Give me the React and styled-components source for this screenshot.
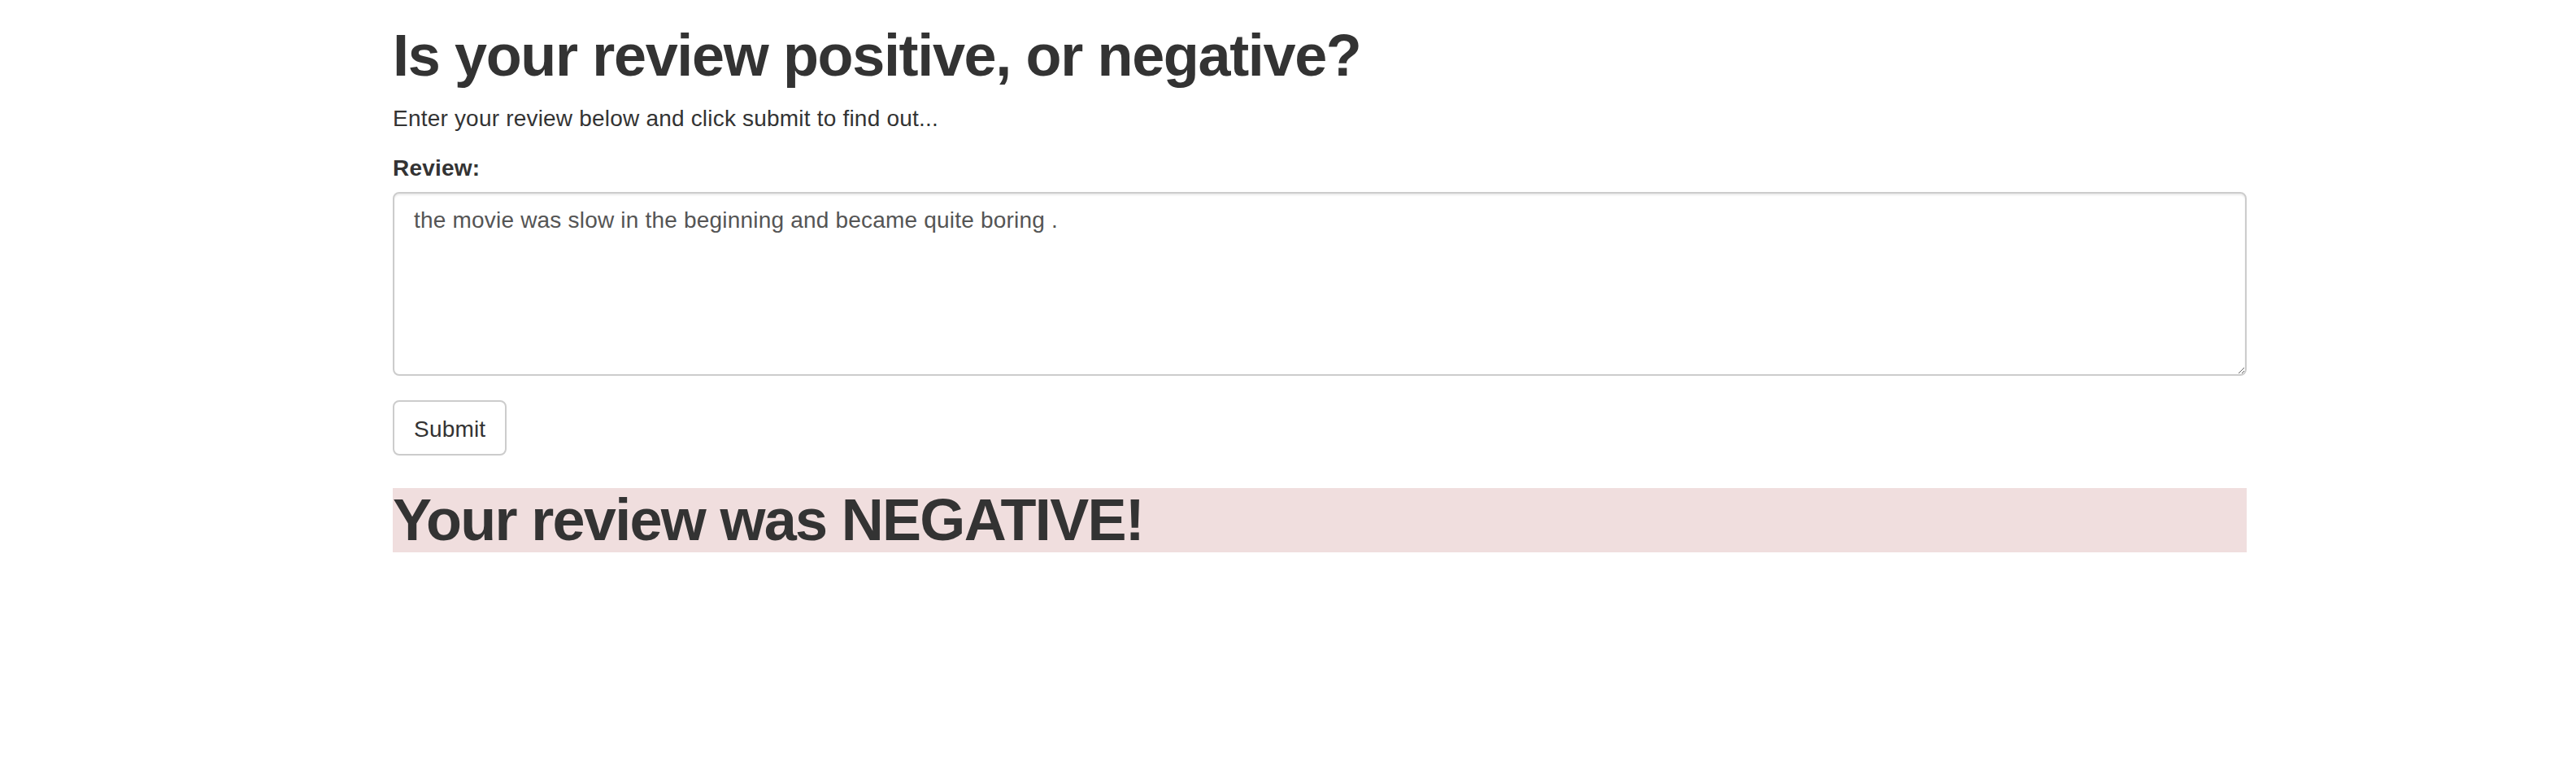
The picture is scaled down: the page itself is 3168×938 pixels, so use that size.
import React from 'react';
import styled, { createGlobalStyle } from 'styled-components';

const GlobalStyle = createGlobalStyle`
    body {
        margin: 0;
        background: #fff;
        color: #333;
        font-family: "Liberation Sans", Arial, sans-serif;
        font-size: 28px;
        line-height: 40px;
        letter-spacing: 0.2px;
    }
`;

const Container = styled.div`
    width: 2280px;
    margin-left: 483px;
    padding-top: 29px;
`;

const Heading = styled.h1`
    margin: ${props => props.top || 0}px 0 18px 0;
    font-size: 72px;
    line-height: 79px;
    font-weight: 700;
    letter-spacing: ${props => props.tight}px;
    color: #333;
    background: ${props => props.bg || 'transparent'};
`;

const Lead = styled.p`
    margin: 0 0 21px 0;
`;

const FormGroup = styled.div`
    display: flex;
    flex-direction: column;
    align-items: flex-start;
    margin-bottom: 30px;
`;

const Label = styled.label`
    font-weight: 700;
    margin-bottom: 9px;
`;

const TextArea = styled.textarea`
    box-sizing: border-box;
    width: 100%;
    height: 226px;
    padding: 13px 24px 12px 24px;
    border: 2px solid #ccc;
    border-radius: 8px;
    box-shadow: inset 0 2px 2px rgba(0, 0, 0, 0.075);
    font-family: "Liberation Sans", Arial, sans-serif;
    font-size: 28px;
    line-height: 40px;
    letter-spacing: 0.2px;
    color: #555;
    background: #fff;
    outline: none;
`;

const Button = styled.button`
    box-sizing: border-box;
    height: 68px;
    padding: 14px 24px 10px 24px;
    border: 2px solid #ccc;
    border-radius: 8px;
    background: #fff;
    color: #333;
    font-family: "Liberation Sans", Arial, sans-serif;
    font-size: 28px;
    line-height: 40px;
    letter-spacing: 0.2px;
    cursor: pointer;
`;

export default function App() {
    return (
        <>
            <GlobalStyle />
            <Container>
                <Heading tight={-1.35}>Is your review positive, or negative?</Heading>
                <Lead>Enter your review below and click submit to find out...</Lead>
                <form onSubmit={e => e.preventDefault()}>
                    <FormGroup>
                        <Label htmlFor="review">Review:</Label>
                        <TextArea
                            id="review"
                            defaultValue="the movie was slow in the beginning and became quite boring ."
                        />
                    </FormGroup>
                    <Button type="submit">Submit</Button>
                </form>
                <Heading top={40} tight={-1.7} bg="#f0dede">Your review was NEGATIVE!</Heading>
            </Container>
        </>
    );
}
